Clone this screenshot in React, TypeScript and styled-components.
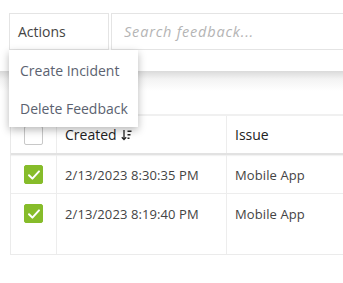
import * as React from 'react';
import styled, { createGlobalStyle } from 'styled-components';

const GlobalStyle = createGlobalStyle`
  html, body {
    margin: 0;
    padding: 0;
    background: #FFFFFF;
    overflow: hidden;
  }
  body {
    font-family: 'Open Sans', 'Liberation Sans', sans-serif;
  }
`;

const rows = [
  { created: '2/13/2023 8:30:35 PM', issue: 'Mobile App' },
  { created: '2/13/2023 8:19:40 PM', issue: 'Mobile App' },
];

export default function App() {
  return (
    <Page>
      <GlobalStyle />
      <Toolbar>
        <ActionsWrap>
          <ActionsButton>Actions</ActionsButton>
          <Menu>
            <MenuItem>Create Incident</MenuItem>
            <MenuItem>Delete Feedback</MenuItem>
          </Menu>
        </ActionsWrap>
        <SearchInput placeholder="Search feedback..." />
      </Toolbar>
      <ShadowBand />
      <Table>
        <HeaderRow>
          <CheckCell>
            <CheckBox />
          </CheckCell>
          <HeadCell>
            Created
            <SortIcon />
          </HeadCell>
          <HeadCell>Issue</HeadCell>
        </HeaderRow>
        <Body>
          {rows.map((row, i) => (
            <Row key={i}>
              <CheckCell>
                <CheckBox checked>
                  <svg width="14" height="12" viewBox="0 0 14 12">
                    <path d="M2 6.2 L5.4 9.6 L12 2.4" fill="none" stroke="#FFFFFF" strokeWidth="2" strokeLinecap="round" strokeLinejoin="round" />
                  </svg>
                </CheckBox>
              </CheckCell>
              <Cell>{row.created}</Cell>
              <Cell>{row.issue}</Cell>
            </Row>
          ))}
        </Body>
      </Table>
    </Page>
  );
}

function SortIcon() {
  return (
    <SortSvg width="11" height="12" viewBox="0 0 11 12">
      <path d="M3 1 V10.5 M0.8 8.2 L3 10.6 L5.2 8.2" fill="none" stroke="#222" strokeWidth="1.3" />
      <rect x="6.5" y="1.5" width="4" height="1.5" fill="#222" />
      <rect x="6.5" y="5" width="3" height="1.5" fill="#222" />
      <rect x="6.5" y="8.5" width="2" height="1.5" fill="#222" />
    </SortSvg>
  );
}

const Page = styled.div`
  width: 343px;
  height: 283px;
  overflow: hidden;
  padding-top: 13px;
  box-sizing: border-box;
`;

const Toolbar = styled.div`
  display: flex;
  gap: 2px;
  margin-left: 9px;
  height: 37px;
  width: 400px;
`;

const ActionsWrap = styled.div`
  position: relative;
  width: 100px;
  flex-shrink: 0;
`;

const ActionsButton = styled.div`
  height: 100%;
  box-sizing: border-box;
  border: 1px solid #E4E4E4;
  padding: 0 8px;
  display: flex;
  align-items: center;
  font-size: 14px;
  color: #444444;
`;

const Menu = styled.div`
  position: absolute;
  top: 37px;
  left: 0;
  width: 129px;
  height: 77px;
  background: #FFFFFF;
  box-shadow: 0 3px 8px rgba(0, 0, 0, 0.28);
  z-index: 10;
  display: flex;
  flex-direction: column;
  padding-top: 2px;
  box-sizing: border-box;
`;

const MenuItem = styled.div`
  height: 38px;
  display: flex;
  align-items: center;
  padding-left: 11px;
  font-size: 14px;
  color: #5B6270;
`;

const SearchInput = styled.input`
  flex: 1;
  height: 37px;
  box-sizing: border-box;
  border: 1px solid #E4E4E4;
  padding: 0 12px;
  font-family: inherit;
  font-size: 14.5px;
  letter-spacing: 0.8px;
  font-style: italic;
  outline: none;
  &::placeholder {
    color: #B4B4B4;
  }
`;

const ShadowBand = styled.div`
  margin-top: 21px;
  height: 20px;
  background: linear-gradient(#DADADA, #F3F3F3 40%, #FFFFFF);
`;

const Table = styled.div`
  margin-top: 23px;
  margin-left: 10px;
  width: 400px;
  border-top: 2px solid #F0F0F0;
  border-left: 1px solid #EBEBEB;
  border-bottom: 1px solid #EBEBEB;
`;

const HeaderRow = styled.div`
  display: grid;
  grid-template-columns: 46px 170px 1fr;
  height: 37px;
  border-bottom: 2px solid #E2E2E2;
  box-shadow: 0 1px 1px rgba(0, 0, 0, 0.05);
`;

const Body = styled.div`
  display: grid;
  grid-template-rows: 39px 1fr;
  height: 99px;
`;

const Row = styled.div`
  display: grid;
  grid-template-columns: 46px 170px 1fr;
  border-bottom: 1px solid #EDEDED;
  &:last-child {
    border-bottom: 0;
  }
`;

const CheckCell = styled.div`
  border-right: 1px solid #EDEDED;
  display: flex;
  justify-content: center;
  align-items: flex-start;
  padding-top: 10px;
`;

const HeadCell = styled.div`
  border-right: 1px solid #EDEDED;
  padding: 9px 0 0 8px;
  font-size: 14px;
  font-weight: 500;
  color: #222222;
  display: flex;
  align-items: flex-start;
`;

const SortSvg = styled.svg`
  margin: 4px 0 0 4px;
`;

const Cell = styled.div`
  border-right: 1px solid #EDEDED;
  padding: 11px 0 0 8px;
  font-size: 13px;
  letter-spacing: 0.1px;
  color: #444444;
`;

const CheckBox = styled.div<{ checked?: boolean }>`
  width: 19px;
  height: 19px;
  box-sizing: border-box;
  border-radius: 2px;
  border: 1px solid ${(p) => (p.checked ? '#86BC2A' : '#C8C8C8')};
  background: ${(p) => (p.checked ? '#86BC2A' : '#FFFFFF')};
  display: flex;
  align-items: center;
  justify-content: center;
`;
